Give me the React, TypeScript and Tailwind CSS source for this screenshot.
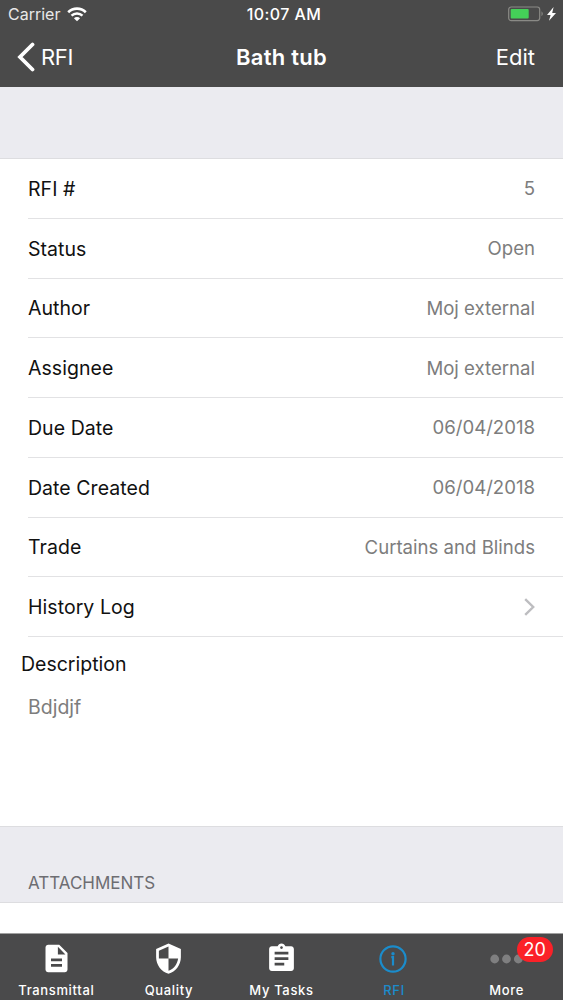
import type { ReactNode } from "react";
import { MdAssignment, MdDescription, MdSecurity } from "react-icons/md";

const rows = [
  { label: "RFI #", value: "5" },
  { label: "Status", value: "Open" },
  { label: "Author", value: "Moj external" },
  { label: "Assignee", value: "Moj external" },
  { label: "Due Date", value: "06/04/2018" },
  { label: "Date Created", value: "06/04/2018" },
  { label: "Trade", value: "Curtains and Blinds" },
  { label: "History Log" },
];

function StatusBar() {
  return (
    <div className="grid h-[28px] grid-cols-3 items-center text-[16px] text-[#e8e8e8]">
      <div className="flex items-center gap-[7px] pl-[8px]">
        <span>Carrier</span>
        <svg width="20" height="15" viewBox="0 0 20 15" fill="none" stroke="#fff">
          <path d="M1.2 5.2a12.6 12.6 0 0 1 17.6 0" strokeWidth="2.6" />
          <path d="M4.5 8.7a7.8 7.8 0 0 1 11 0" strokeWidth="2.4" />
          <path d="M10 14.2 6.9 11.2a4.4 4.4 0 0 1 6.2 0z" fill="#fff" stroke="none" />
        </svg>
      </div>
      <span className="pl-[5px] text-center font-medium tracking-[0.4px] text-white">
        10:07 AM
      </span>
      <div className="flex justify-end pr-[5px]">
        <svg width="50" height="16" viewBox="0 0 50 16">
          <rect x=".7" y="1" width="31" height="13.6" rx="2.5" fill="none" stroke="#8a8a86" strokeWidth="1.2" />
          <rect x="2.7" y="3" width="18" height="9.6" rx="1" fill="#44d058" />
          <path d="M33.5 5.3q2.6 2.5 0 5z" fill="#8a8a86" />
          <path d="M45.6 1 39 9h3.6L41 14.8 48 7h-3.8z" fill="#fff" />
        </svg>
      </div>
    </div>
  );
}

function NavBar() {
  return (
    <div className="grid h-[58px] grid-cols-3 items-center text-[22px] text-white">
      <div className="flex items-center gap-[6px] pl-[17px]">
        <svg width="18" height="30" viewBox="0 0 18 30" fill="none" stroke="#fff" strokeWidth="3.8">
          <path d="M15.5 2.5 3 15l12.5 12.5" strokeLinecap="round" />
        </svg>
        <span className="tracking-[-0.3px]">RFI</span>
      </div>
      <span className="text-center font-semibold tracking-[0.25px]">Bath tub</span>
      <span className="pr-[28px] text-right">Edit</span>
    </div>
  );
}

function Tab({
  label,
  active = false,
  children,
}: {
  label: string;
  active?: boolean;
  children: ReactNode;
}) {
  return (
    <div
      className={`flex flex-1 flex-col items-center pt-[8px] ${
        active ? "text-[#1b8ccb]" : "text-white"
      }`}
    >
      <div className="relative flex h-[33px] items-center">{children}</div>
      <span className="mt-[6px] text-[13px] leading-[18px] font-medium tracking-[0.65px]">
        {label}
      </span>
    </div>
  );
}

export default function App() {
  return (
    <div className="flex h-[1000px] w-[563px] flex-col overflow-hidden bg-white font-['Inter',sans-serif]">
      <header className="h-[87px] bg-[#4a4a4a]">
        <StatusBar />
        <NavBar />
      </header>

      <div className="h-[72px] border-b border-[#dddde0] bg-[#ebebf0]" />

      {/* Details */}
      <ul className="pl-[28px]">
        {rows.map((row) => (
          <li
            key={row.label}
            className="flex h-[59.75px] items-center justify-between border-b border-[#e2e2e4] pt-[2px] pr-[28px] text-[19.5px]"
          >
            <span className="tracking-[0.05px] text-[#111]">{row.label}</span>
            {row.value ? (
              <span className="text-[18.6px] text-[#7d7d7d]">{row.value}</span>
            ) : (
              <svg className="-mt-[2px]" width="11" height="18" viewBox="0 0 11 18" fill="none" stroke="#bdbdc0" strokeWidth="2.4">
                <path d="m1.2 1.2 8 7.8-8 7.8" />
              </svg>
            )}
          </li>
        ))}
      </ul>

      {/* Description */}
      <section className="h-[189px] pt-[13px] text-[19.5px] leading-[28px]">
        <h2 className="pl-[21px] text-[#111]">Description</h2>
        <p className="mt-[15px] pl-[28px] text-[#7d7d7d]">Bdjdjf</p>
      </section>

      <div className="flex h-[77px] items-end border-y border-[#dddde0] bg-[#ebebf0] pb-[7px] pl-[28px] text-[17px] leading-[24px] text-[#6d6d72]">
        ATTACHMENTS
      </div>

      <div className="flex-1" />

      <nav className="flex h-[67px] border-t border-[#a0a0a0] bg-[#4a4a4b]">
        <Tab label="Transmittal">
          <MdDescription size={33} />
        </Tab>
        <Tab label="Quality">
          <MdSecurity size={33} />
        </Tab>
        <Tab label="My Tasks">
          <MdAssignment size={33} />
        </Tab>
        <Tab label="RFI" active>
          <svg className="-ml-[2px]" width="28" height="28" viewBox="0 0 28 28" fill="none" stroke="currentColor" strokeWidth="2.2">
            <circle cx="14" cy="14" r="12.6" />
            <circle cx="14" cy="8.7" r="1.7" fill="currentColor" stroke="none" />
            <path d="M12.3 12.2H14v8.3" />
          </svg>
        </Tab>
        <Tab label="More">
          <svg className="-ml-[1px]" width="33" height="10" viewBox="0 0 33 10" fill="#7f7f80">
            <circle cx="4.7" cy="5" r="4.4" />
            <circle cx="16.5" cy="5" r="4.4" />
            <circle cx="28.3" cy="5" r="4.4" />
          </svg>
          <span className="absolute -top-[5px] left-[26px] flex h-[25px] w-[36px] items-center justify-center rounded-full bg-[#fb2128] text-[18px]">
            20
          </span>
        </Tab>
      </nav>
    </div>
  );
}
